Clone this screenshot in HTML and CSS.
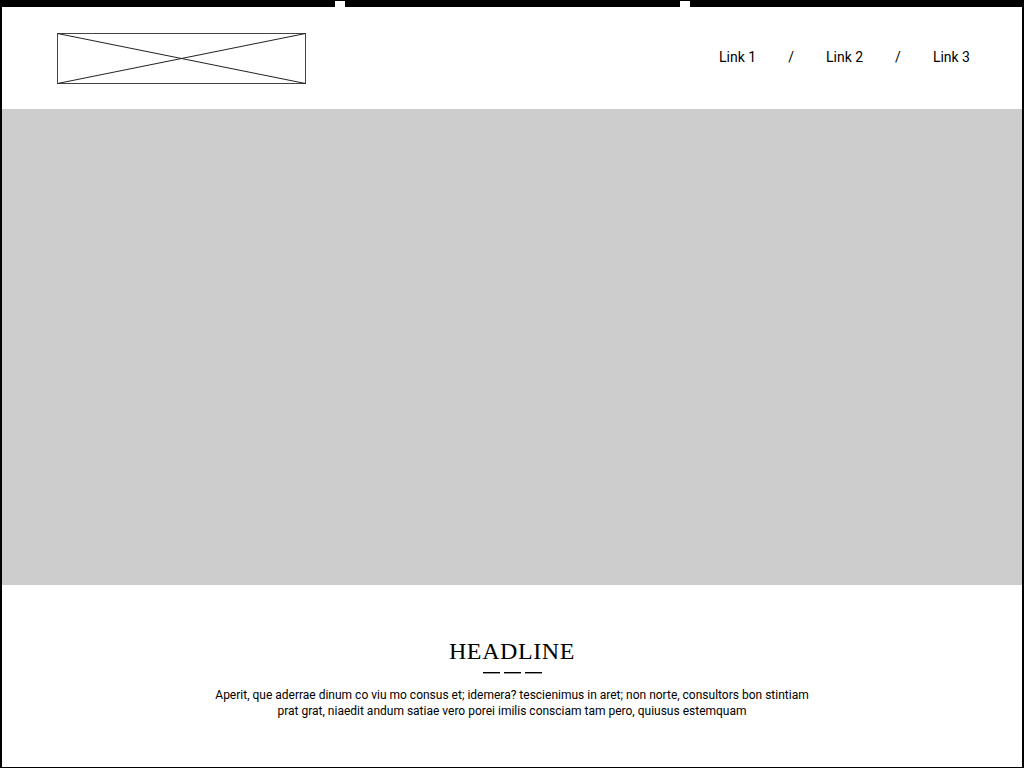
FILE: index.html
```html
<!DOCTYPE html>
<html>
<head>
<meta charset="utf-8">
<link rel="stylesheet" href="styles.css">
</head>
<body>
<div class="frame">
  <div class="topbar">
    <div class="seg seg-a"></div>
    <div class="notch"></div>
    <div class="seg seg-b"></div>
    <div class="notch"></div>
    <div class="seg seg-c"></div>
  </div>
  <header class="header">
    <svg class="logo" width="249" height="51" viewBox="0 0 249 51">
      <rect x="0.5" y="0.5" width="248" height="50" fill="none" stroke="#444" stroke-width="1"/>
      <line x1="0.5" y1="0.5" x2="248.5" y2="50.5" stroke="#222" stroke-width="1"/>
      <line x1="0.5" y1="50.5" x2="248.5" y2="0.5" stroke="#222" stroke-width="1"/>
    </svg>
    <nav class="nav">
      <span class="link">Link 1</span>
      <span class="sep">/</span>
      <span class="link">Link 2</span>
      <span class="sep">/</span>
      <span class="link">Link 3</span>
    </nav>
  </header>
  <div class="hero"></div>
  <section class="content">
    <h1 class="headline">HEADLINE</h1>
    <div class="dashes"><span></span><span></span><span></span></div>
    <p class="text">Aperit, que aderrae dinum co viu mo consus et; idemera? tescienimus in aret; non norte, consultors bon stintiam<br>prat grat, niaedit andum satiae vero porei imilis consciam tam pero, quiusus estemquam</p>
  </section>
</div>
</body>
</html>
```

FILE: styles.css
```css
html, body {
  margin: 0;
  padding: 0;
  background: #fff;
}
.frame {
  width: 1024px;
  height: 768px;
  box-sizing: border-box;
  border-left: 2px solid #000;
  border-right: 2px solid #000;
  border-bottom: 1px solid #000;
  display: flex;
  flex-direction: column;
  font-family: Roboto, "Liberation Sans", sans-serif;
  color: #000;
}
.topbar {
  height: 7px;
  display: flex;
  background: #000;
  margin: 0 -2px;
}
.seg-a { width: 335px; }
.seg-b { width: 335px; }
.seg-c { flex: 1; }
.notch {
  width: 10px;
  margin-top: 1px;
  background: #fff;
}
.header {
  height: 102px;
  display: flex;
  align-items: center;
  justify-content: space-between;
  padding: 0 52px 0 55px;
}
.logo {
  display: block;
  margin-top: 1px;
}
.nav {
  display: flex;
  align-items: center;
  gap: 32px;
  font-size: 14px;
  margin-bottom: 2px;
}
.hero {
  height: 476px;
  background: #cccccc;
}
.content {
  flex: 1;
  display: flex;
  flex-direction: column;
  align-items: center;
  padding-top: 52px;
}
.headline {
  margin: 0;
  font-family: "Liberation Serif", serif;
  font-weight: normal;
  font-size: 24px;
  line-height: 28px;
  letter-spacing: 0.6px;
}
.dashes {
  display: flex;
  gap: 4px;
  margin-top: 7px;
}
.dashes span {
  width: 17px;
  height: 1px;
  background: #000;
  box-shadow: 0 1px 0 #999;
}
.text {
  margin: 14px 0 0;
  font-size: 12px;
  line-height: 16px;
  text-align: center;
  white-space: nowrap;
}
```
